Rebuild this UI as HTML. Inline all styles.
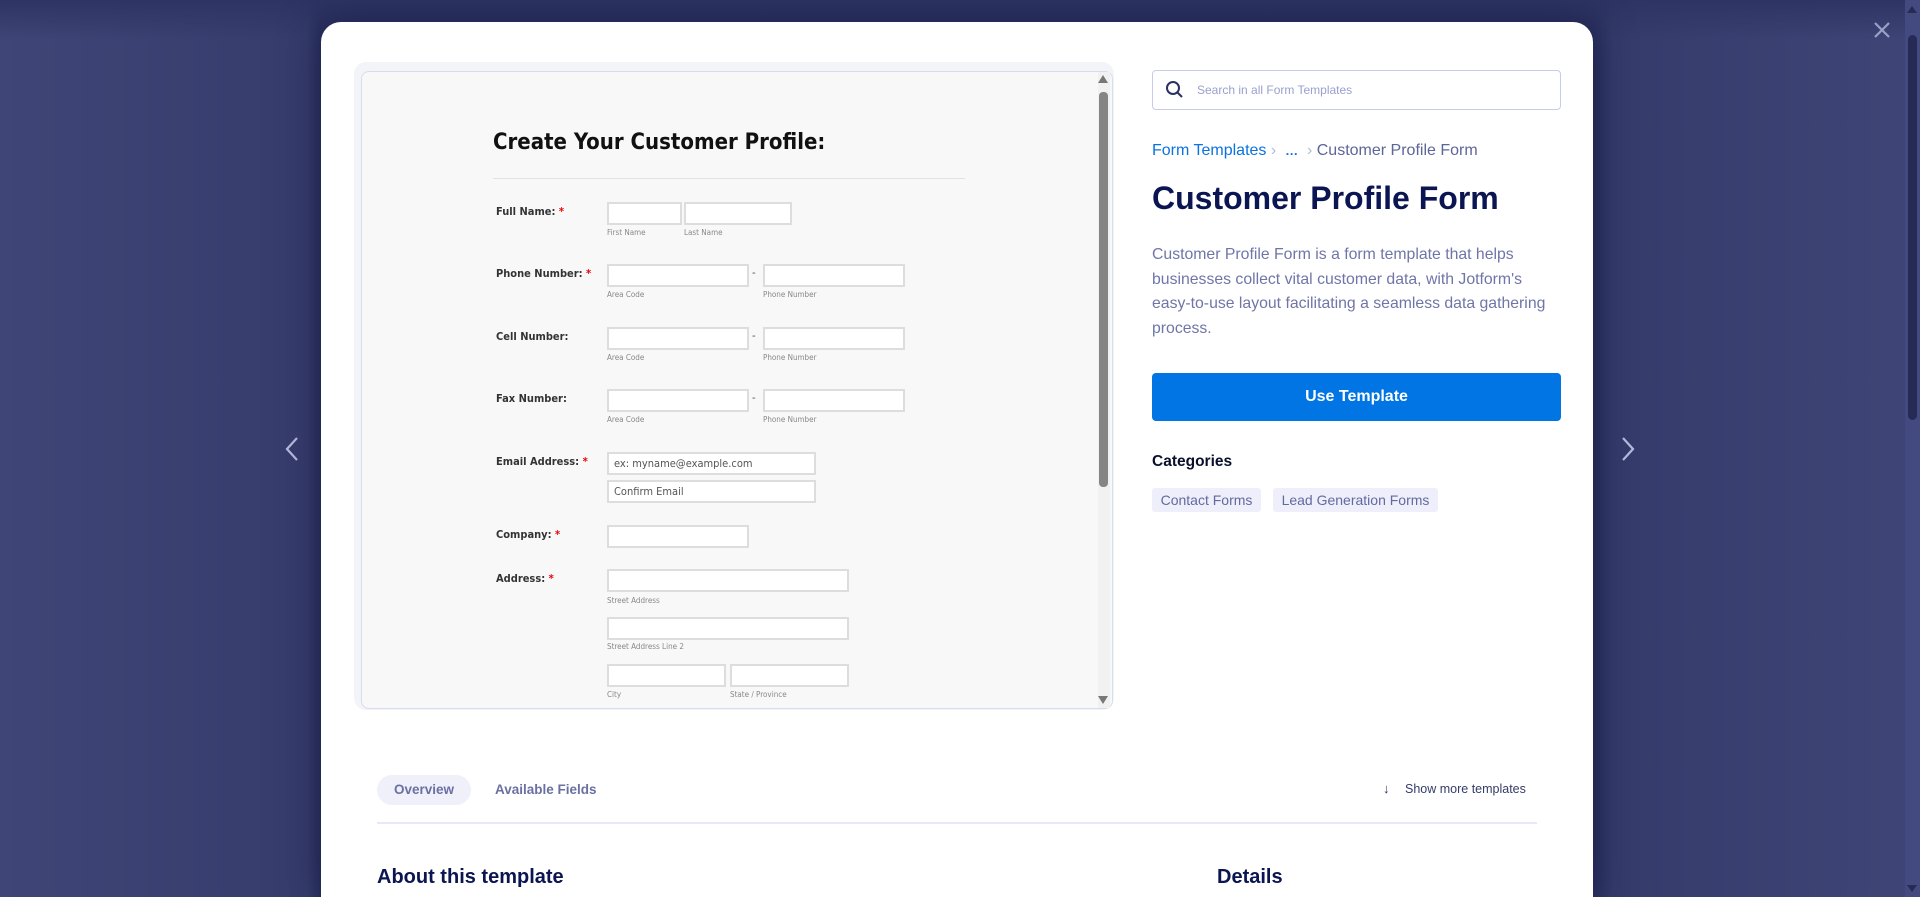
<!DOCTYPE html>
<html><head><meta charset="utf-8"><style>
*{margin:0;padding:0;box-sizing:border-box}
html,body{width:1920px;height:897px;overflow:hidden}
body{background:#3b4172;font-family:"Liberation Sans",sans-serif;position:relative}
.bg{position:absolute;inset:0;background:linear-gradient(90deg,#3f4576 0%,#363c6c 16%,#2a3060 16.7%,#2a3060 83%,#353b6b 84%,#3f4576 100%)}
.top{position:absolute;left:0;right:0;top:0;height:40px;background:linear-gradient(#2e3463,rgba(59,65,114,0))}
.modal{position:absolute;left:321px;top:22px;width:1272px;height:875px;background:#fff;border-radius:20px 20px 0 0;box-shadow:0 0 40px rgba(20,24,60,.6)}
.abs{position:absolute}
.pv{position:absolute;left:354px;top:62px;width:760px;height:648px;background:#f3f4f7;border-radius:12px}
.frame{position:absolute;left:361px;top:71px;width:752px;height:638px;border:1px solid #d8dcef;border-radius:8px;background:#f8f8f8;overflow:hidden}
.f{position:absolute;font-family:"DejaVu Sans Condensed","DejaVu Sans",sans-serif;color:#333}
.lbl{position:absolute;left:496px;font-family:"DejaVu Sans Condensed","DejaVu Sans",sans-serif;font-size:11px;color:#333;font-weight:bold}
.lbl b{color:#e00}
.in{position:absolute;height:23px;border:2px solid #ddd;background:#fff;font-family:"DejaVu Sans Condensed",sans-serif;font-size:12px;color:#555;padding:3px 5px}
.sub{position:absolute;font-family:"DejaVu Sans Condensed",sans-serif;font-size:8px;color:#888}
.dash{position:absolute;left:752px;font-size:11px;color:#555}
</style></head><body>
<div class="bg"></div><div class="top"></div>
<svg class="abs" style="left:1872px;top:20px" width="20" height="20"><path d="M3 3L17 17M17 3L3 17" stroke="#9ba0c6" stroke-width="2.2"/></svg>
<div class="abs" style="left:1905px;top:0;width:15px;height:897px;background:#434a80"></div>
<div class="abs" style="left:1908px;top:35px;width:9px;height:385px;background:#262b56;border-radius:5px"></div>
<svg class="abs" style="left:1906px;top:4px" width="12" height="10"><path d="M6 2L11 9H1z" fill="#262b56"/></svg>
<svg class="abs" style="left:1906px;top:884px" width="12" height="10"><path d="M6 8L11 1H1z" fill="#262b56"/></svg>
<svg class="abs" style="left:282px;top:436px" width="20" height="26"><path d="M15 2L5 13L15 24" stroke="#b8bde0" stroke-width="2.2" fill="none"/></svg>
<svg class="abs" style="left:1618px;top:436px" width="20" height="26"><path d="M5 2L15 13L5 24" stroke="#b8bde0" stroke-width="2.2" fill="none"/></svg>
<div class="modal"></div>
<div class="pv"></div>
<div class="frame"></div>
<div class="abs" style="left:1098px;top:72px;width:12px;height:636px;background:#f1f1f1"></div>
<div class="abs" style="left:1099px;top:92px;width:9px;height:395px;background:#858585;border-radius:4px"></div>
<svg class="abs" style="left:1097px;top:74px" width="12" height="10"><path d="M6 1L11 9H1z" fill="#777"/></svg>
<svg class="abs" style="left:1097px;top:695px" width="12" height="10"><path d="M6 9L11 1H1z" fill="#777"/></svg>
<div class="f" style="left:493px;top:130px;font-size:22px;color:#111;font-weight:bold">Create Your Customer Profile:</div>
<div class="abs" style="left:493px;top:178px;width:472px;height:1px;background:#e2e2e2"></div>

<div class="lbl" style="top:205px">Full Name: <b>*</b></div>
<div class="in" style="left:607px;top:202px;width:75px"></div><div class="in" style="left:684px;top:202px;width:108px"></div>
<div class="sub" style="left:607px;top:228px">First Name</div><div class="sub" style="left:684px;top:228px">Last Name</div>

<div class="lbl" style="top:267px">Phone Number: <b>*</b></div>
<div class="in" style="left:607px;top:264px;width:142px"></div><div class="dash" style="top:267px">-</div><div class="in" style="left:763px;top:264px;width:142px"></div>
<div class="sub" style="left:607px;top:290px">Area Code</div><div class="sub" style="left:763px;top:290px">Phone Number</div>

<div class="lbl" style="top:330px">Cell Number:</div>
<div class="in" style="left:607px;top:327px;width:142px"></div><div class="dash" style="top:330px">-</div><div class="in" style="left:763px;top:327px;width:142px"></div>
<div class="sub" style="left:607px;top:353px">Area Code</div><div class="sub" style="left:763px;top:353px">Phone Number</div>

<div class="lbl" style="top:392px">Fax Number:</div>
<div class="in" style="left:607px;top:389px;width:142px"></div><div class="dash" style="top:392px">-</div><div class="in" style="left:763px;top:389px;width:142px"></div>
<div class="sub" style="left:607px;top:415px">Area Code</div><div class="sub" style="left:763px;top:415px">Phone Number</div>

<div class="lbl" style="top:455px">Email Address: <b>*</b></div>
<div class="in" style="left:607px;top:452px;width:209px;font-size:11px">ex: myname@example.com</div>
<div class="in" style="left:607px;top:480px;width:209px;font-size:11px">Confirm Email</div>

<div class="lbl" style="top:528px">Company: <b>*</b></div>
<div class="in" style="left:607px;top:525px;width:142px"></div>

<div class="lbl" style="top:572px">Address: <b>*</b></div>
<div class="in" style="left:607px;top:569px;width:242px"></div><div class="sub" style="left:607px;top:596px">Street Address</div>
<div class="in" style="left:607px;top:617px;width:242px"></div><div class="sub" style="left:607px;top:642px">Street Address Line 2</div>
<div class="in" style="left:607px;top:664px;width:119px"></div><div class="in" style="left:730px;top:664px;width:119px"></div>
<div class="sub" style="left:607px;top:690px">City</div><div class="sub" style="left:730px;top:690px">State / Province</div>

<div class="abs" style="left:1152px;top:70px;width:409px;height:40px;border:1px solid #c8cceb;border-radius:4px"></div>
<svg class="abs" style="left:1165px;top:80px" width="20" height="20"><circle cx="8" cy="8" r="6" stroke="#2b3160" stroke-width="2" fill="none"/><path d="M12.5 12.5L17 17" stroke="#2b3160" stroke-width="2"/></svg>
<div class="abs" style="left:1197px;top:83px;font-size:12px;color:#9aa0cf">Search in all Form Templates</div>

<div class="abs" style="left:1152px;top:142px;font-size:16px;color:#0a73e0">Form Templates <span style="color:#b5b9d6">›</span> &nbsp;<b style="font-size:13px">…</b> &nbsp;<span style="color:#b5b9d6">›</span> <span style="color:#5d6599">Customer Profile Form</span></div>
<div class="abs" style="left:1152px;top:180px;font-size:32px;font-weight:bold;color:#0a1551">Customer Profile Form</div>
<div class="abs" style="left:1152px;top:243px;width:405px;font-size:15.8px;line-height:24.5px;color:#6f76a7">Customer Profile Form is a form template that helps businesses collect vital customer data, with Jotform's easy-to-use layout facilitating a seamless data gathering process.</div>
<div class="abs" style="left:1152px;top:373px;width:409px;height:48px;background:#0075e3;border-radius:4px;color:#fff;font-weight:bold;font-size:16px;text-align:center;line-height:48px">Use Template</div>
<div class="abs" style="left:1152px;top:453px;font-size:15.5px;font-weight:bold;color:#0a0f2e">Categories</div>
<div class="abs" style="left:1152px;top:488px;width:109px;height:24px;background:#eeeffa;border-radius:3px;font-size:14px;line-height:24px;color:#626aa0;text-align:center">Contact Forms</div>
<div class="abs" style="left:1273px;top:488px;width:165px;height:24px;background:#eeeffa;border-radius:3px;font-size:14px;line-height:24px;color:#626aa0;text-align:center">Lead Generation Forms</div>

<div class="abs" style="left:377px;top:775px;width:94px;height:30px;background:#f0f0fb;border-radius:15px;font-size:13.5px;font-weight:bold;line-height:30px;text-align:center;color:#6a70a2">Overview</div>
<div class="abs" style="left:495px;top:775px;font-size:13.5px;font-weight:bold;line-height:30px;color:#6a70a2">Available Fields</div>
<div class="abs" style="left:1383px;top:781px;font-size:13px;color:#2b3160">↓</div>
<div class="abs" style="left:1405px;top:782px;font-size:12.5px;color:#343c6a">Show more templates</div>
<div class="abs" style="left:377px;top:822px;width:1160px;height:2px;background:#e8e8f8"></div>
<div class="abs" style="left:377px;top:866px;font-size:20px;font-weight:bold;color:#0a1551">About this template</div>
<div class="abs" style="left:1217px;top:866px;font-size:20px;font-weight:bold;color:#0a1551">Details</div>
</body></html>
